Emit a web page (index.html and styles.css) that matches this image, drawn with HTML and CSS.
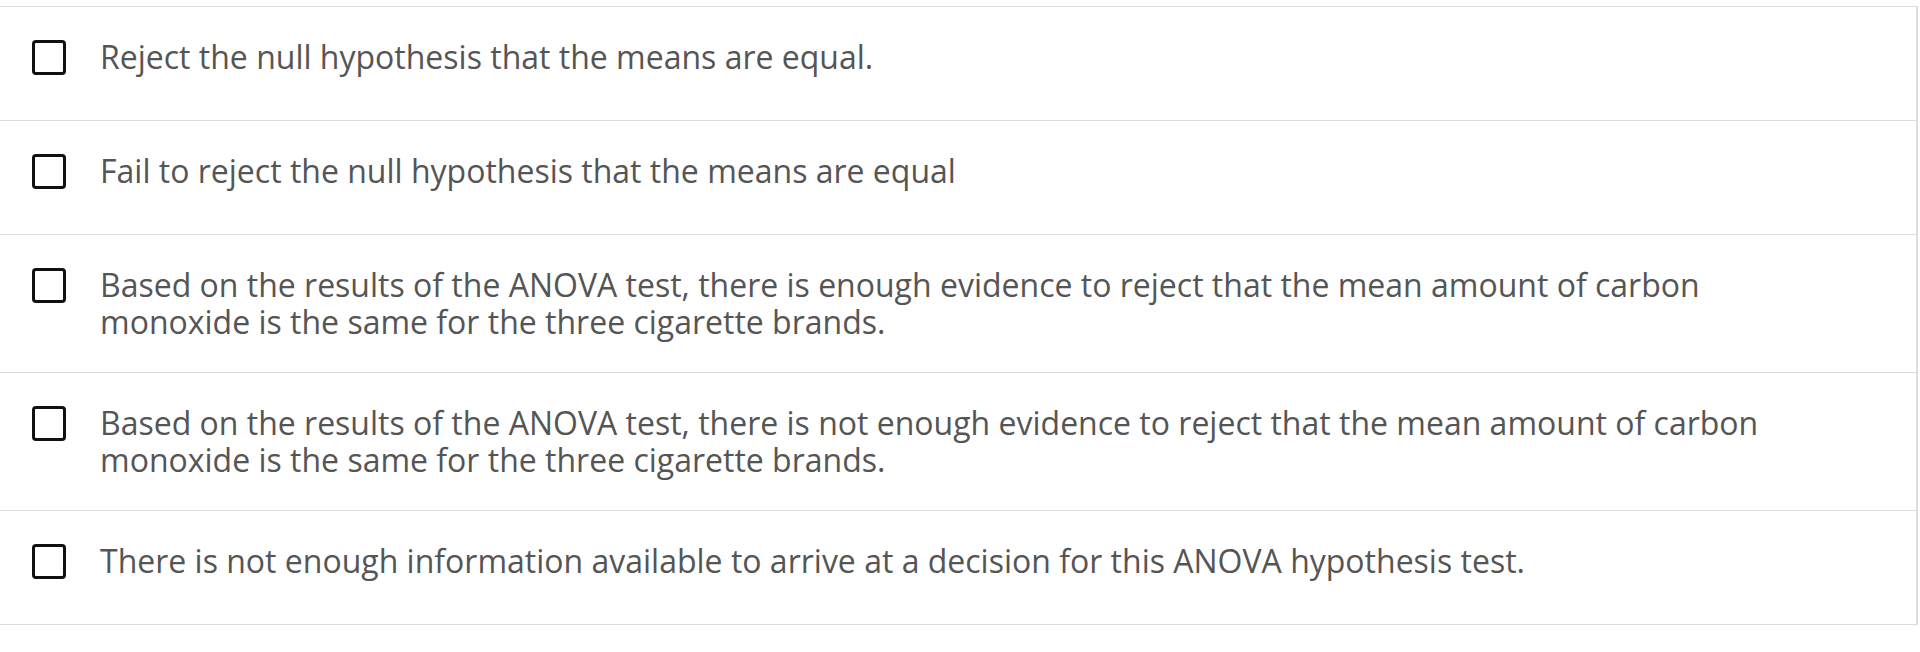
FILE: index.html
```html
<!DOCTYPE html>
<html>
<head>
  <title>ANOVA Decision</title>
  <link rel="stylesheet" href="styles.css">
</head>
<body>

<div class="choices">
  <label class="choice">
    <span class="box"></span>
    <span class="choice-text">Reject the null hypothesis that the means are equal.</span>
  </label>
  <label class="choice">
    <span class="box"></span>
    <span class="choice-text">Fail to reject the null hypothesis that the means are equal</span>
  </label>
  <label class="choice">
    <span class="box"></span>
    <span class="choice-text">Based on the results of the ANOVA test, there is enough evidence to reject that the mean amount of carbon monoxide is the same for the three cigarette brands.</span>
  </label>
  <label class="choice">
    <span class="box"></span>
    <span class="choice-text">Based on the results of the ANOVA test, there is not enough evidence to reject that the mean amount of carbon monoxide is the same for the three cigarette brands.</span>
  </label>
  <label class="choice">
    <span class="box"></span>
    <span class="choice-text">There is not enough information available to arrive at a decision for this ANOVA hypothesis test.</span>
  </label>
</div>

</body>
</html>
```

FILE: styles.css
```css
body {
  margin: 0;
  font-family: "Open Sans", sans-serif;
  background: #fff;
}
.choices {
  width: 1916px;
  margin-top: 6px;
  border-right: 2px solid #dedede;
  border-bottom: 1px solid #dcdcdc;
}
.choice {
  display: flex;
  align-items: flex-start;
  gap: 34px;
  padding: 32px 120px 32px 32px;
  border-top: 1px solid #dcdcdc;
  cursor: pointer;
}
.box {
  flex: none;
  width: 34px;
  height: 35px;
  margin-top: 1px;
  box-sizing: border-box;
  border: 3.5px solid #111;
  border-radius: 4px;
}
.choice-text {
  min-height: 49px;
  font-size: 32px;
  line-height: 36.5px;
  color: #555;
}
```
